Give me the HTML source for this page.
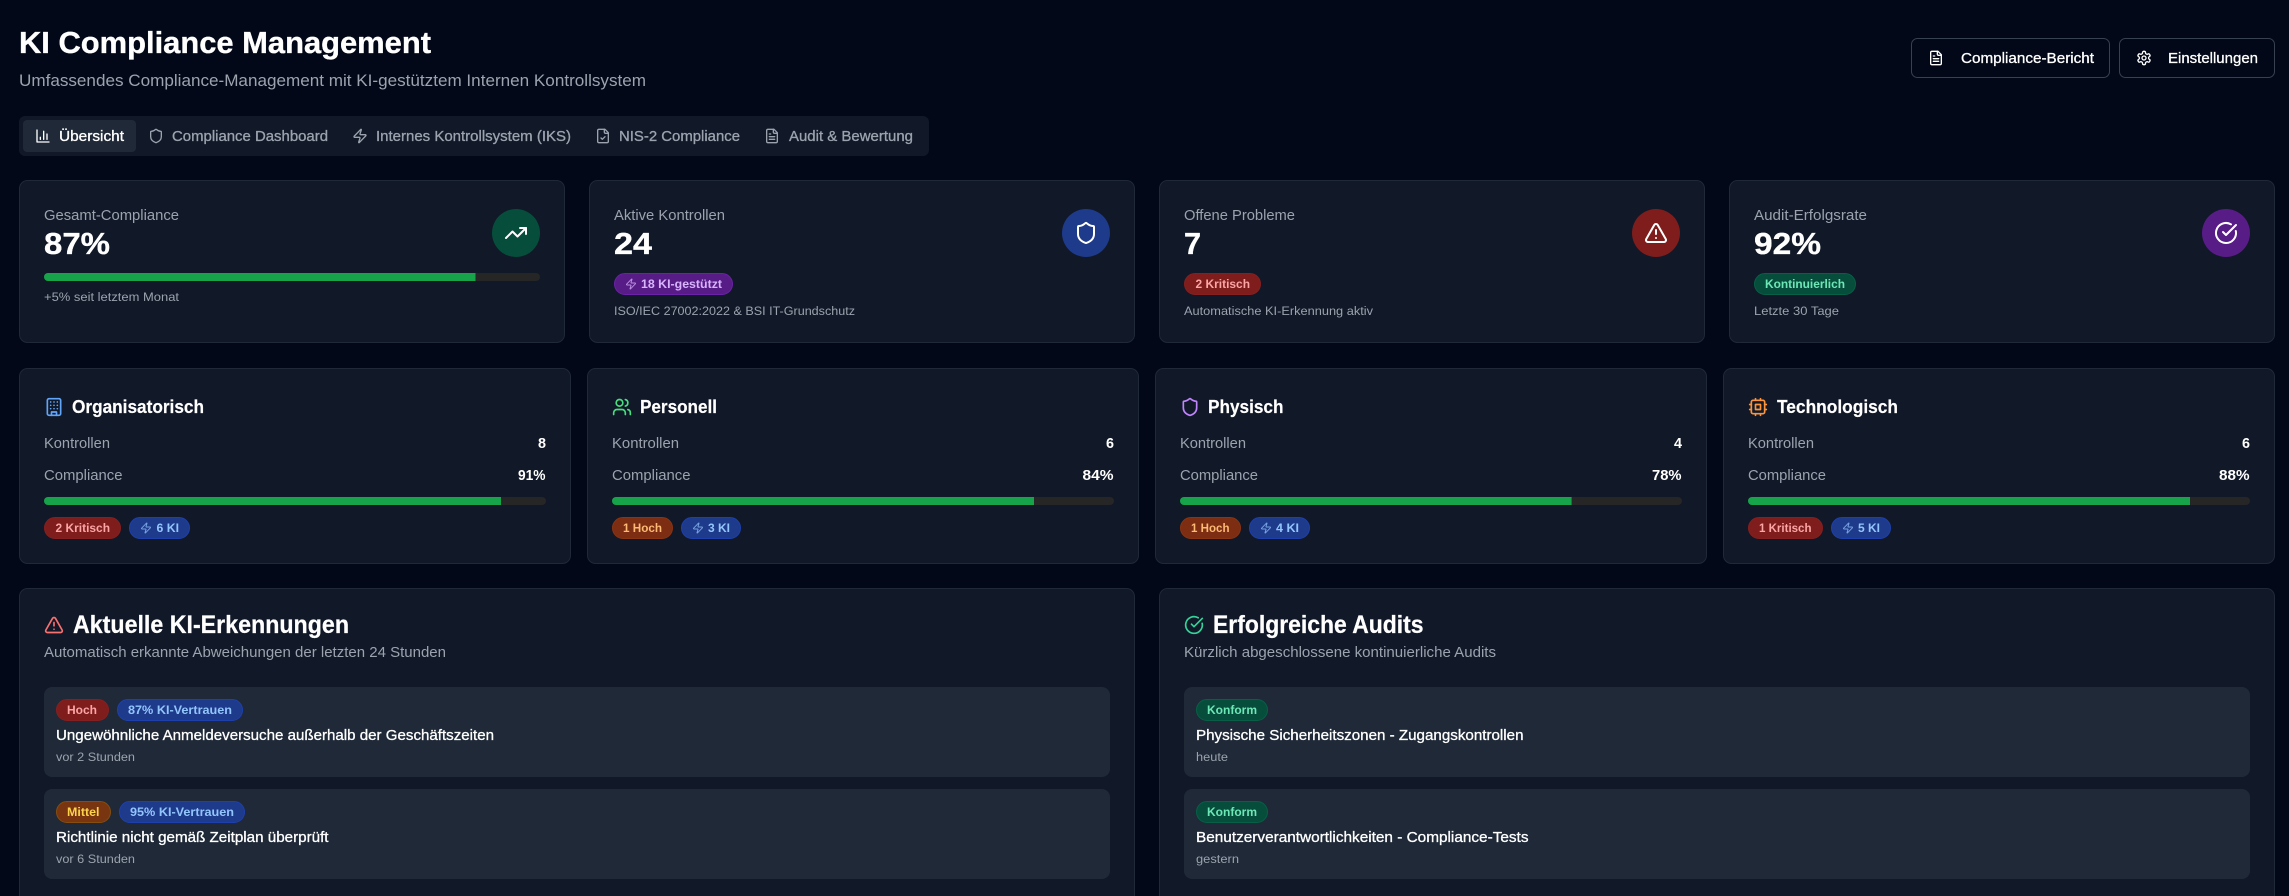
<!DOCTYPE html>
<html lang="de">
<head>
<meta charset="utf-8">
<title>KI Compliance Management</title>
<style>
html,body{margin:0;padding:0;background:#020817;width:2289px;height:896px;overflow:hidden}
svg.page{display:block;position:absolute;left:0;top:0}
text{font-family:"Liberation Sans",Arial,sans-serif;white-space:pre}
text[font-size="12"]{font-size:12.3px}
text[font-size="14"]{font-size:14.4px}
text[font-size="16"]{font-size:16.4px}
text[font-size="18"]{font-size:18.4px;stroke:#fff;stroke-width:.2px}
text[font-size="24"]{font-size:24.6px;stroke:#fff;stroke-width:.25px}
text[font-size="30"]{font-size:30.5px;stroke:#fff;stroke-width:.35px}
.b{font-weight:700}
.m{stroke-width:.3px;paint-order:stroke}
.w{fill:#fff;stroke:#fff}
.g{fill:#9ca3af}
.t{fill:#9ca3af;stroke:#9ca3af}
.card{fill:#111827;stroke:#1f2937}
.item{fill:#1f2937}
.track{fill:#262626}
.fill{fill:#16a34a}
.i{fill:none;stroke-width:2;stroke-linecap:round;stroke-linejoin:round}
</style>
</head>
<body>
<svg class="page" xmlns="http://www.w3.org/2000/svg" width="2289" height="896" viewBox="0 0 2289 896">
<rect width="2289" height="896" fill="#020817"/>

<!-- Header -->
<text class="b" x="19" y="53" font-size="30" fill="#fff" textLength="412" lengthAdjust="spacingAndGlyphs">KI Compliance Management</text>
<text x="19" y="86" font-size="16" class="g" textLength="627" lengthAdjust="spacingAndGlyphs">Umfassendes Compliance-Management mit KI-gestütztem Internen Kontrollsystem</text>

<rect x="1911.5" y="38.5" width="198" height="39" rx="6" fill="#020817" stroke="#374151"/>
<svg x="1928" y="50" width="16" height="16" viewBox="0 0 24 24" class="i" stroke="#fff"><path d="M15 2H6a2 2 0 0 0-2 2v16a2 2 0 0 0 2 2h12a2 2 0 0 0 2-2V7Z"/><path d="M14 2v4a2 2 0 0 0 2 2h4"/><path d="M10 9H8"/><path d="M16 13H8"/><path d="M16 17H8"/></svg>
<text x="1961" y="63" font-size="14" class="m w" textLength="133" lengthAdjust="spacingAndGlyphs">Compliance-Bericht</text>
<rect x="2119.5" y="38.5" width="155" height="39" rx="6" fill="#020817" stroke="#374151"/>
<svg x="2136" y="50" width="16" height="16" viewBox="0 0 24 24" class="i" stroke="#fff"><path d="M12.22 2h-.44a2 2 0 0 0-2 2v.18a2 2 0 0 1-1 1.73l-.43.25a2 2 0 0 1-2 0l-.15-.08a2 2 0 0 0-2.73.73l-.22.38a2 2 0 0 0 .73 2.73l.15.1a2 2 0 0 1 1 1.72v.51a2 2 0 0 1-1 1.74l-.15.09a2 2 0 0 0-.73 2.73l.22.38a2 2 0 0 0 2.73.73l.15-.08a2 2 0 0 1 2 0l.43.25a2 2 0 0 1 1 1.73V20a2 2 0 0 0 2 2h.44a2 2 0 0 0 2-2v-.18a2 2 0 0 1 1-1.73l.43-.25a2 2 0 0 1 2 0l.15.08a2 2 0 0 0 2.73-.73l.22-.39a2 2 0 0 0-.73-2.73l-.15-.08a2 2 0 0 1-1-1.74v-.5a2 2 0 0 1 1-1.74l.15-.09a2 2 0 0 0 .73-2.73l-.22-.38a2 2 0 0 0-2.73-.73l-.15.08a2 2 0 0 1-2 0l-.43-.25a2 2 0 0 1-1-1.73V4a2 2 0 0 0-2-2z"/><circle cx="12" cy="12" r="3"/></svg>
<text x="2168" y="63" font-size="14" class="m w" textLength="90" lengthAdjust="spacingAndGlyphs">Einstellungen</text>

<!-- Tabs -->
<rect x="19" y="116" width="910" height="40" rx="6" fill="#111827"/>
<rect x="23" y="120" width="113" height="32" rx="4" fill="#1f2937"/>
<svg x="35" y="128" width="16" height="16" viewBox="0 0 24 24" class="i" stroke="#fff"><path d="M3 3v18h18"/><path d="M18 17V9"/><path d="M13 17V5"/><path d="M8 17v-3"/></svg>
<text x="59" y="141" font-size="14" class="m w" textLength="65" lengthAdjust="spacingAndGlyphs">Übersicht</text>
<svg x="148" y="128" width="16" height="16" viewBox="0 0 24 24" class="i" stroke="#9ca3af"><path d="M20 13c0 5-3.5 7.5-7.66 8.95a1 1 0 0 1-.67-.01C7.5 20.5 4 18 4 13V6a1 1 0 0 1 1-1c2 0 4.5-1.2 6.24-2.72a1.17 1.17 0 0 1 1.52 0C14.51 3.81 17 5 19 5a1 1 0 0 1 1 1z"/></svg>
<text x="172" y="141" font-size="14" class="m t" textLength="156" lengthAdjust="spacingAndGlyphs">Compliance Dashboard</text>
<svg x="352" y="128" width="16" height="16" viewBox="0 0 24 24" class="i" stroke="#9ca3af"><path d="M4 14a1 1 0 0 1-.78-1.63l9.9-10.2a.5.5 0 0 1 .86.46l-1.92 6.02A1 1 0 0 0 13 10h7a1 1 0 0 1 .78 1.63l-9.9 10.2a.5.5 0 0 1-.86-.46l1.92-6.02A1 1 0 0 0 11 14z"/></svg>
<text x="376" y="141" font-size="14" class="m t" textLength="195" lengthAdjust="spacingAndGlyphs">Internes Kontrollsystem (IKS)</text>
<svg x="595" y="128" width="16" height="16" viewBox="0 0 24 24" class="i" stroke="#9ca3af"><path d="M15 2H6a2 2 0 0 0-2 2v16a2 2 0 0 0 2 2h12a2 2 0 0 0 2-2V7Z"/><path d="M14 2v4a2 2 0 0 0 2 2h4"/><path d="m9 15 2 2 4-4"/></svg>
<text x="619" y="141" font-size="14" class="m t" textLength="121" lengthAdjust="spacingAndGlyphs">NIS-2 Compliance</text>
<svg x="764" y="128" width="16" height="16" viewBox="0 0 24 24" class="i" stroke="#9ca3af"><path d="M15 2H6a2 2 0 0 0-2 2v16a2 2 0 0 0 2 2h12a2 2 0 0 0 2-2V7Z"/><path d="M14 2v4a2 2 0 0 0 2 2h4"/><path d="M10 9H8"/><path d="M16 13H8"/><path d="M16 17H8"/></svg>
<text x="789" y="141" font-size="14" class="m t" textLength="124" lengthAdjust="spacingAndGlyphs">Audit &amp; Bewertung</text>

<!-- Stat card 1 -->
<rect class="card" x="19.5" y="180.5" width="545" height="162" rx="8"/>
<text x="44" y="220" font-size="14" class="g" textLength="135" lengthAdjust="spacingAndGlyphs">Gesamt-Compliance</text>
<text x="44" y="254" font-size="30" class="b" fill="#fff" textLength="66" lengthAdjust="spacingAndGlyphs">87%</text>
<circle cx="516" cy="233" r="24" fill="#064e3b"/>
<svg x="504" y="221" width="24" height="24" viewBox="0 0 24 24" class="i" stroke="#fff"><polyline points="22 7 13.5 15.5 8.5 10.5 2 17"/><polyline points="16 7 22 7 22 13"/></svg>
<rect class="track" x="44" y="273" width="496" height="8" rx="4"/>
<path class="fill" d="M48 273H475.5V281H48a4 4 0 0 1 0-8z"/>
<text x="44" y="301" font-size="12" class="g" textLength="135" lengthAdjust="spacingAndGlyphs">+5% seit letztem Monat</text>

<!-- Stat card 2 -->
<rect class="card" x="589.5" y="180.5" width="545" height="162" rx="8"/>
<text x="614" y="220" font-size="14" class="g" textLength="111" lengthAdjust="spacingAndGlyphs">Aktive Kontrollen</text>
<text x="614" y="254" font-size="30" class="b" fill="#fff" textLength="38" lengthAdjust="spacingAndGlyphs">24</text>
<circle cx="1086" cy="233" r="24" fill="#1e3a8a"/>
<svg x="1074" y="221" width="24" height="24" viewBox="0 0 24 24" class="i" stroke="#fff"><path d="M20 13c0 5-3.5 7.5-7.66 8.95a1 1 0 0 1-.67-.01C7.5 20.5 4 18 4 13V6a1 1 0 0 1 1-1c2 0 4.5-1.2 6.24-2.72a1.17 1.17 0 0 1 1.52 0C14.51 3.81 17 5 19 5a1 1 0 0 1 1 1z"/></svg>
<rect x="614.5" y="273.5" width="118" height="21" rx="10.5" fill="#581c87" stroke="#6b21a8"/>
<svg x="625" y="278" width="12" height="12" viewBox="0 0 24 24" class="i" stroke="#d8b4fe" opacity=".75"><path d="M4 14a1 1 0 0 1-.78-1.63l9.9-10.2a.5.5 0 0 1 .86.46l-1.92 6.02A1 1 0 0 0 13 10h7a1 1 0 0 1 .78 1.63l-9.9 10.2a.5.5 0 0 1-.86-.46l1.92-6.02A1 1 0 0 0 11 14z"/></svg>
<text x="641" y="288" font-size="12" class="b" fill="#d8b4fe" textLength="81" lengthAdjust="spacingAndGlyphs">18 KI-gestützt</text>
<text x="614" y="315" font-size="12" class="g" textLength="241" lengthAdjust="spacingAndGlyphs">ISO/IEC 27002:2022 &amp; BSI IT-Grundschutz</text>

<!-- Stat card 3 -->
<rect class="card" x="1159.5" y="180.5" width="545" height="162" rx="8"/>
<text x="1184" y="220" font-size="14" class="g" textLength="111" lengthAdjust="spacingAndGlyphs">Offene Probleme</text>
<text x="1184" y="254" font-size="30" class="b" fill="#fff" textLength="17" lengthAdjust="spacingAndGlyphs">7</text>
<circle cx="1656" cy="233" r="24" fill="#7f1d1d"/>
<svg x="1644" y="221" width="24" height="24" viewBox="0 0 24 24" class="i" stroke="#fff"><path d="m21.73 18-8-14a2 2 0 0 0-3.48 0l-8 14A2 2 0 0 0 4 21h16a2 2 0 0 0 1.73-3"/><path d="M12 9v4"/><path d="M12 17h.01"/></svg>
<rect x="1184.5" y="273.5" width="76" height="21" rx="10.5" fill="#7f1d1d" stroke="#861f1f"/>
<text x="1195.5" y="288" font-size="12" class="b" fill="#fca5a5" textLength="54.5" lengthAdjust="spacingAndGlyphs">2 Kritisch</text>
<text x="1184" y="315" font-size="12" class="g" textLength="189" lengthAdjust="spacingAndGlyphs">Automatische KI-Erkennung aktiv</text>

<!-- Stat card 4 -->
<rect class="card" x="1729.5" y="180.5" width="545" height="162" rx="8"/>
<text x="1754" y="220" font-size="14" class="g" textLength="113" lengthAdjust="spacingAndGlyphs">Audit-Erfolgsrate</text>
<text x="1754" y="254" font-size="30" class="b" fill="#fff" textLength="67" lengthAdjust="spacingAndGlyphs">92%</text>
<circle cx="2226" cy="233" r="24" fill="#581c87"/>
<svg x="2214" y="221" width="24" height="24" viewBox="0 0 24 24" class="i" stroke="#fff"><path d="M21.801 10A10 10 0 1 1 17 3.335"/><path d="m9 11 3 3L22 4"/></svg>
<rect x="1754.5" y="273.5" width="101" height="21" rx="10.5" fill="#064e3b" stroke="#065f46"/>
<text x="1765" y="288" font-size="12" class="b" fill="#6ee7b7" textLength="80" lengthAdjust="spacingAndGlyphs">Kontinuierlich</text>
<text x="1754" y="315" font-size="12" class="g" textLength="85" lengthAdjust="spacingAndGlyphs">Letzte 30 Tage</text>

<!-- Category 1 -->
<rect class="card" x="19.5" y="368.5" width="551" height="195" rx="8"/>
<svg x="44" y="397" width="20" height="20" viewBox="0 0 24 24" class="i" stroke="#60a5fa"><rect x="4" y="2" width="16" height="20" rx="2"/><path d="M9 22v-4h6v4"/><path d="M8 6h.01"/><path d="M16 6h.01"/><path d="M12 6h.01"/><path d="M12 10h.01"/><path d="M12 14h.01"/><path d="M16 10h.01"/><path d="M16 14h.01"/><path d="M8 10h.01"/><path d="M8 14h.01"/></svg>
<text x="72" y="413" font-size="18" class="b" fill="#fff" textLength="132" lengthAdjust="spacingAndGlyphs">Organisatorisch</text>
<text x="44" y="448" font-size="14" class="g" textLength="66" lengthAdjust="spacingAndGlyphs">Kontrollen</text>
<text x="538" y="448" font-size="14" class="b" fill="#fff" textLength="8" lengthAdjust="spacingAndGlyphs">8</text>
<text x="44" y="480" font-size="14" class="g" textLength="78.5" lengthAdjust="spacingAndGlyphs">Compliance</text>
<text x="518" y="480" font-size="14" class="b" fill="#fff" textLength="27.5" lengthAdjust="spacingAndGlyphs">91%</text>
<rect class="track" x="44" y="497" width="502" height="8" rx="4"/>
<path class="fill" d="M48 497H501V505H48a4 4 0 0 1 0-8z"/>
<rect x="44.5" y="517.5" width="76" height="21" rx="10.5" fill="#7f1d1d" stroke="#861f1f"/>
<text x="55.5" y="532" font-size="12" class="b" fill="#fca5a5" textLength="54.5" lengthAdjust="spacingAndGlyphs">2 Kritisch</text>
<rect x="129.5" y="517.5" width="60" height="21" rx="10.5" fill="#1e3a8a" stroke="#1e40af"/>
<svg x="140" y="522" width="12" height="12" viewBox="0 0 24 24" class="i" stroke="#93c5fd" opacity=".75"><path d="M4 14a1 1 0 0 1-.78-1.63l9.9-10.2a.5.5 0 0 1 .86.46l-1.92 6.02A1 1 0 0 0 13 10h7a1 1 0 0 1 .78 1.63l-9.9 10.2a.5.5 0 0 1-.86-.46l1.92-6.02A1 1 0 0 0 11 14z"/></svg>
<text x="156.5" y="532" font-size="12" class="b" fill="#93c5fd" textLength="22.5" lengthAdjust="spacingAndGlyphs">6 KI</text>

<!-- Category 2 -->
<rect class="card" x="587.5" y="368.5" width="551" height="195" rx="8"/>
<svg x="612" y="397" width="20" height="20" viewBox="0 0 24 24" class="i" stroke="#4ade80"><path d="M16 21v-2a4 4 0 0 0-4-4H6a4 4 0 0 0-4 4v2"/><circle cx="9" cy="7" r="4"/><path d="M22 21v-2a4 4 0 0 0-3-3.87"/><path d="M16 3.13a4 4 0 0 1 0 7.75"/></svg>
<text x="640" y="413" font-size="18" class="b" fill="#fff" textLength="77" lengthAdjust="spacingAndGlyphs">Personell</text>
<text x="612" y="448" font-size="14" class="g" textLength="67" lengthAdjust="spacingAndGlyphs">Kontrollen</text>
<text x="1106" y="448" font-size="14" class="b" fill="#fff" textLength="8" lengthAdjust="spacingAndGlyphs">6</text>
<text x="612" y="480" font-size="14" class="g" textLength="78.5" lengthAdjust="spacingAndGlyphs">Compliance</text>
<text x="1082.5" y="480" font-size="14" class="b" fill="#fff" textLength="31" lengthAdjust="spacingAndGlyphs">84%</text>
<rect class="track" x="612" y="497" width="502" height="8" rx="4"/>
<path class="fill" d="M616 497H1034V505H616a4 4 0 0 1 0-8z"/>
<rect x="612.5" y="517.5" width="60" height="21" rx="10.5" fill="#7c2d12" stroke="#8a3412"/>
<text x="623" y="532" font-size="12" class="b" fill="#fdba74" textLength="39" lengthAdjust="spacingAndGlyphs">1 Hoch</text>
<rect x="681.5" y="517.5" width="59" height="21" rx="10.5" fill="#1e3a8a" stroke="#1e40af"/>
<svg x="692" y="522" width="12" height="12" viewBox="0 0 24 24" class="i" stroke="#93c5fd" opacity=".75"><path d="M4 14a1 1 0 0 1-.78-1.63l9.9-10.2a.5.5 0 0 1 .86.46l-1.92 6.02A1 1 0 0 0 13 10h7a1 1 0 0 1 .78 1.63l-9.9 10.2a.5.5 0 0 1-.86-.46l1.92-6.02A1 1 0 0 0 11 14z"/></svg>
<text x="708" y="532" font-size="12" class="b" fill="#93c5fd" textLength="22" lengthAdjust="spacingAndGlyphs">3 KI</text>

<!-- Category 3 -->
<rect class="card" x="1155.5" y="368.5" width="551" height="195" rx="8"/>
<svg x="1180" y="397" width="20" height="20" viewBox="0 0 24 24" class="i" stroke="#c084fc"><path d="M20 13c0 5-3.5 7.5-7.66 8.95a1 1 0 0 1-.67-.01C7.5 20.5 4 18 4 13V6a1 1 0 0 1 1-1c2 0 4.5-1.2 6.24-2.72a1.17 1.17 0 0 1 1.52 0C14.51 3.81 17 5 19 5a1 1 0 0 1 1 1z"/></svg>
<text x="1208" y="413" font-size="18" class="b" fill="#fff" textLength="75.5" lengthAdjust="spacingAndGlyphs">Physisch</text>
<text x="1180" y="448" font-size="14" class="g" textLength="66" lengthAdjust="spacingAndGlyphs">Kontrollen</text>
<text x="1674" y="448" font-size="14" class="b" fill="#fff" textLength="8" lengthAdjust="spacingAndGlyphs">4</text>
<text x="1180" y="480" font-size="14" class="g" textLength="78" lengthAdjust="spacingAndGlyphs">Compliance</text>
<text x="1652" y="480" font-size="14" class="b" fill="#fff" textLength="29.5" lengthAdjust="spacingAndGlyphs">78%</text>
<rect class="track" x="1180" y="497" width="502" height="8" rx="4"/>
<path class="fill" d="M1184 497H1571.6V505H1184a4 4 0 0 1 0-8z"/>
<rect x="1180.5" y="517.5" width="60" height="21" rx="10.5" fill="#7c2d12" stroke="#8a3412"/>
<text x="1191" y="532" font-size="12" class="b" fill="#fdba74" textLength="38.5" lengthAdjust="spacingAndGlyphs">1 Hoch</text>
<rect x="1249.5" y="517.5" width="60" height="21" rx="10.5" fill="#1e3a8a" stroke="#1e40af"/>
<svg x="1260" y="522" width="12" height="12" viewBox="0 0 24 24" class="i" stroke="#93c5fd" opacity=".75"><path d="M4 14a1 1 0 0 1-.78-1.63l9.9-10.2a.5.5 0 0 1 .86.46l-1.92 6.02A1 1 0 0 0 13 10h7a1 1 0 0 1 .78 1.63l-9.9 10.2a.5.5 0 0 1-.86-.46l1.92-6.02A1 1 0 0 0 11 14z"/></svg>
<text x="1276" y="532" font-size="12" class="b" fill="#93c5fd" textLength="23" lengthAdjust="spacingAndGlyphs">4 KI</text>

<!-- Category 4 -->
<rect class="card" x="1723.5" y="368.5" width="551" height="195" rx="8"/>
<svg x="1748" y="397" width="20" height="20" viewBox="0 0 24 24" class="i" stroke="#fb923c"><rect x="4" y="4" width="16" height="16" rx="2"/><rect x="9" y="9" width="6" height="6"/><path d="M15 2v2"/><path d="M15 20v2"/><path d="M2 15h2"/><path d="M2 9h2"/><path d="M20 15h2"/><path d="M20 9h2"/><path d="M9 2v2"/><path d="M9 20v2"/></svg>
<text x="1777" y="413" font-size="18" class="b" fill="#fff" textLength="121" lengthAdjust="spacingAndGlyphs">Technologisch</text>
<text x="1748" y="448" font-size="14" class="g" textLength="66" lengthAdjust="spacingAndGlyphs">Kontrollen</text>
<text x="2242" y="448" font-size="14" class="b" fill="#fff" textLength="8" lengthAdjust="spacingAndGlyphs">6</text>
<text x="1748" y="480" font-size="14" class="g" textLength="78" lengthAdjust="spacingAndGlyphs">Compliance</text>
<text x="2219" y="480" font-size="14" class="b" fill="#fff" textLength="30.5" lengthAdjust="spacingAndGlyphs">88%</text>
<rect class="track" x="1748" y="497" width="502" height="8" rx="4"/>
<path class="fill" d="M1752 497H2190V505H1752a4 4 0 0 1 0-8z"/>
<rect x="1748.5" y="517.5" width="74" height="21" rx="10.5" fill="#7f1d1d" stroke="#861f1f"/>
<text x="1759" y="532" font-size="12" class="b" fill="#fca5a5" textLength="52.5" lengthAdjust="spacingAndGlyphs">1 Kritisch</text>
<rect x="1831.5" y="517.5" width="59" height="21" rx="10.5" fill="#1e3a8a" stroke="#1e40af"/>
<svg x="1842" y="522" width="12" height="12" viewBox="0 0 24 24" class="i" stroke="#93c5fd" opacity=".75"><path d="M4 14a1 1 0 0 1-.78-1.63l9.9-10.2a.5.5 0 0 1 .86.46l-1.92 6.02A1 1 0 0 0 13 10h7a1 1 0 0 1 .78 1.63l-9.9 10.2a.5.5 0 0 1-.86-.46l1.92-6.02A1 1 0 0 0 11 14z"/></svg>
<text x="1858" y="532" font-size="12" class="b" fill="#93c5fd" textLength="22" lengthAdjust="spacingAndGlyphs">5 KI</text>

<!-- Detections panel -->
<rect class="card" x="19.5" y="588.5" width="1115" height="340" rx="8"/>
<svg x="44" y="615" width="20" height="20" viewBox="0 0 24 24" class="i" stroke="#f87171"><path d="m21.73 18-8-14a2 2 0 0 0-3.48 0l-8 14A2 2 0 0 0 4 21h16a2 2 0 0 0 1.73-3"/><path d="M12 9v4"/><path d="M12 17h.01"/></svg>
<text x="73" y="633" font-size="24" class="b" fill="#fff" textLength="276" lengthAdjust="spacingAndGlyphs">Aktuelle KI-Erkennungen</text>
<text x="44" y="657" font-size="14" class="g" textLength="402" lengthAdjust="spacingAndGlyphs">Automatisch erkannte Abweichungen der letzten 24 Stunden</text>

<rect class="item" x="44" y="687" width="1066" height="90" rx="8"/>
<rect x="56.5" y="699.5" width="52" height="21" rx="10.5" fill="#7f1d1d" stroke="#861f1f"/>
<text x="67" y="714" font-size="12" class="b" fill="#fca5a5" textLength="30" lengthAdjust="spacingAndGlyphs">Hoch</text>
<rect x="117.5" y="699.5" width="125" height="21" rx="10.5" fill="#1e3a8a" stroke="#1e40af"/>
<text x="128" y="714" font-size="12" class="b" fill="#93c5fd" textLength="104" lengthAdjust="spacingAndGlyphs">87% KI-Vertrauen</text>
<text x="56" y="740" font-size="14" class="m w" textLength="438" lengthAdjust="spacingAndGlyphs">Ungewöhnliche Anmeldeversuche außerhalb der Geschäftszeiten</text>
<text x="56" y="761" font-size="12" class="g" textLength="79" lengthAdjust="spacingAndGlyphs">vor 2 Stunden</text>

<rect class="item" x="44" y="789" width="1066" height="90" rx="8"/>
<rect x="56.5" y="801.5" width="54" height="21" rx="10.5" fill="#78350f" stroke="#854d0e"/>
<text x="67" y="816" font-size="12" class="b" fill="#fcd34d" textLength="32.5" lengthAdjust="spacingAndGlyphs">Mittel</text>
<rect x="119.5" y="801.5" width="125" height="21" rx="10.5" fill="#1e3a8a" stroke="#1e40af"/>
<text x="130" y="816" font-size="12" class="b" fill="#93c5fd" textLength="104" lengthAdjust="spacingAndGlyphs">95% KI-Vertrauen</text>
<text x="56" y="842" font-size="14" class="m w" textLength="272.5" lengthAdjust="spacingAndGlyphs">Richtlinie nicht gemäß Zeitplan überprüft</text>
<text x="56" y="863" font-size="12" class="g" textLength="79" lengthAdjust="spacingAndGlyphs">vor 6 Stunden</text>

<!-- Audits panel -->
<rect class="card" x="1159.5" y="588.5" width="1115" height="340" rx="8"/>
<svg x="1184" y="615" width="20" height="20" viewBox="0 0 24 24" class="i" stroke="#34d399"><path d="M21.801 10A10 10 0 1 1 17 3.335"/><path d="m9 11 3 3L22 4"/></svg>
<text x="1213" y="633" font-size="24" class="b" fill="#fff" textLength="210.5" lengthAdjust="spacingAndGlyphs">Erfolgreiche Audits</text>
<text x="1184" y="657" font-size="14" class="g" textLength="312" lengthAdjust="spacingAndGlyphs">Kürzlich abgeschlossene kontinuierliche Audits</text>

<rect class="item" x="1184" y="687" width="1066" height="90" rx="8"/>
<rect x="1196.5" y="699.5" width="71" height="21" rx="10.5" fill="#064e3b" stroke="#065f46"/>
<text x="1207" y="714" font-size="12" class="b" fill="#6ee7b7" textLength="50" lengthAdjust="spacingAndGlyphs">Konform</text>
<text x="1196" y="740" font-size="14" class="m w" textLength="327.5" lengthAdjust="spacingAndGlyphs">Physische Sicherheitszonen - Zugangskontrollen</text>
<text x="1196" y="761" font-size="12" class="g" textLength="32" lengthAdjust="spacingAndGlyphs">heute</text>

<rect class="item" x="1184" y="789" width="1066" height="90" rx="8"/>
<rect x="1196.5" y="801.5" width="71" height="21" rx="10.5" fill="#064e3b" stroke="#065f46"/>
<text x="1207" y="816" font-size="12" class="b" fill="#6ee7b7" textLength="50" lengthAdjust="spacingAndGlyphs">Konform</text>
<text x="1196" y="842" font-size="14" class="m w" textLength="332.5" lengthAdjust="spacingAndGlyphs">Benutzerverantwortlichkeiten - Compliance-Tests</text>
<text x="1196" y="863" font-size="12" class="g" textLength="43" lengthAdjust="spacingAndGlyphs">gestern</text>
</svg>
</body>
</html>
